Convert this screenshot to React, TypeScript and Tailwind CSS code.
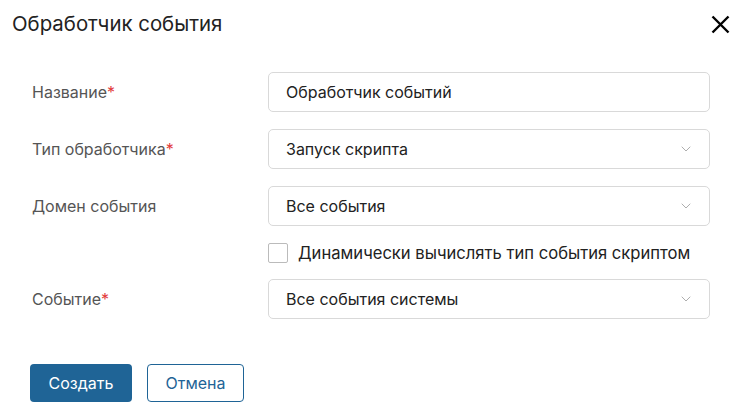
import { ChevronDown } from "lucide-react";

const rows = [
    { label: "Название", required: true, value: "Обработчик событий", select: false },
    { label: "Тип обработчика", required: true, value: "Запуск скрипта", select: true },
    { label: "Домен события", required: false, value: "Все события", select: true },
];

function Field({ label, required, value, select }: { label: string; required: boolean; value: string; select: boolean }) {
    return (
        <div className="flex items-center h-10">
            <div className="w-[236px] text-[16px] text-[#555]">
                {label}
                {required && <span className="text-[#e23a3a]">*</span>}
            </div>
            <div className="flex-1 h-10 flex items-center justify-between border border-[#d9d9d9] rounded-[5px] pl-[17px] pr-[15px] text-[16px] text-[#222]">
                <span>{value}</span>
                {select && <ChevronDown className="w-[16px] h-[16px] text-[#999]" strokeWidth={1.2} />}
            </div>
        </div>
    );
}

export default function App() {
    return (
        <div className="w-[745px] h-[410px] bg-white relative font-['Inter',sans-serif]">
            <div className="flex items-center justify-between h-[48px] pl-[12px] pr-[15px]">
                <span className="text-[20.4px] text-[#222]">Обработчик события</span>
                <svg width="19" height="19" viewBox="0 0 19 19" className="text-black">
                    <path d="M1.5 1.5 L17.5 17.5 M17.5 1.5 L1.5 17.5" stroke="currentColor" strokeWidth="2.4" />
                </svg>
            </div>
            <div className="pl-[32px] pr-[35px] pt-[24px] flex flex-col gap-[17px]">
                {rows.map((r) => (
                    <Field key={r.label} {...r} />
                ))}
            </div>
            <div className="pl-[268px] pr-[35px] mt-[17px] flex items-center gap-[10px] h-[20px]">
                <div className="w-[20px] h-[20px] border border-[#bbb] rounded-[2px]" />
                <span className="text-[16.6px] text-[#222]">Динамически вычислять тип события скриптом</span>
            </div>
            <div className="pl-[32px] pr-[35px] mt-[16px]">
                <Field label="Событие" required value="Все события системы" select />
            </div>
            <div className="flex gap-[15px] pl-[30px] mt-[45px]">
                <button className="h-[38px] w-[102px] rounded-[4px] bg-[#1f6496] text-white text-[16px]">Создать</button>
                <button className="h-[38px] w-[97px] rounded-[4px] border border-[#1f6496] text-[#1f6496] text-[16px]">Отмена</button>
            </div>
        </div>
    );
}
